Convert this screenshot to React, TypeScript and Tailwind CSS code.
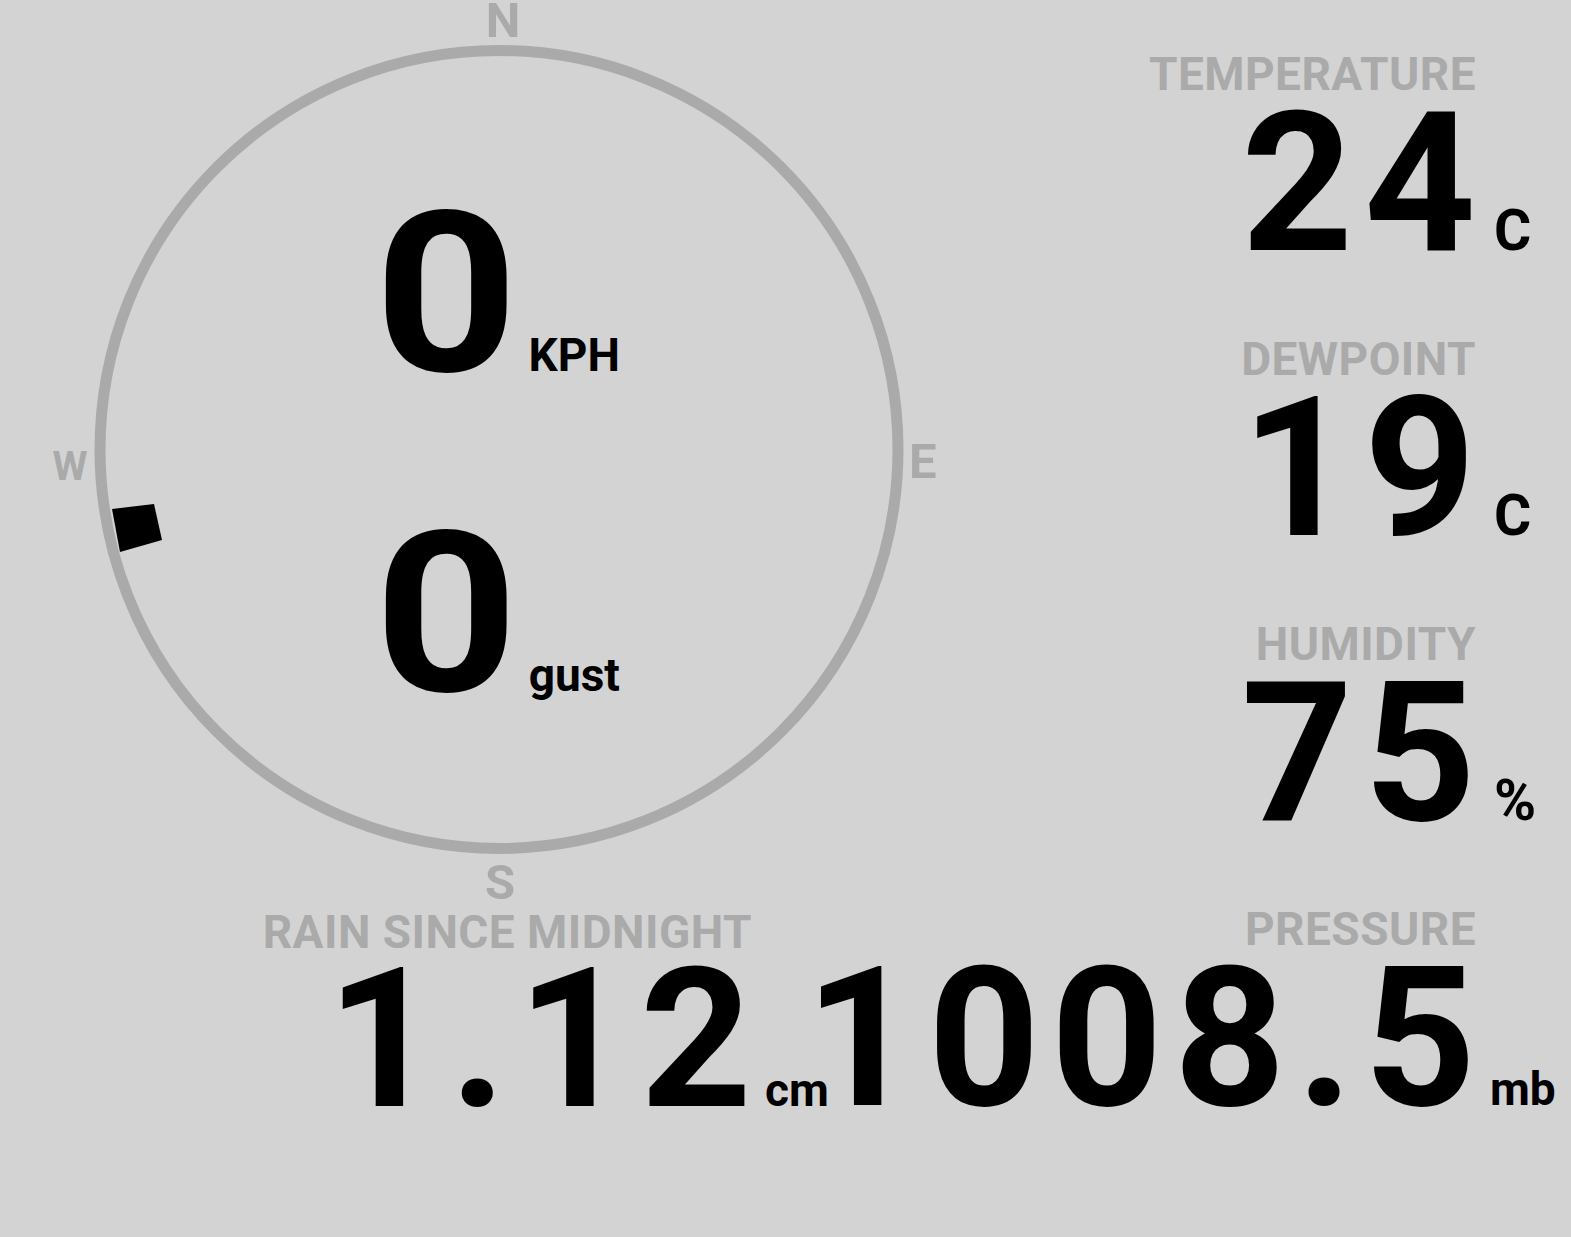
import React from "react";

type StatProps = {
  label: string;
  value: string;
  unit: string;
  unitClass: string;
  unitCol: string;
  numberMt: string;
};

function Stat({ label, value, unit, unitClass, unitCol, numberMt }: StatProps) {
  return (
    <div className="flex flex-col">
      <div className="flex justify-end">
        <div className="shrink-0 whitespace-nowrap text-[46px] leading-[36px] text-[#aaaaaa] tracking-[0.01em]">
          {label}
        </div>
        <div className={unitCol} />
      </div>
      <div className={`flex items-baseline justify-end ${numberMt}`}>
        <div className="shrink-0 whitespace-nowrap text-[195px] leading-[150px] text-black tracking-[11px] -mr-[11px]">
          {value}
        </div>
        <div className={`${unitCol} shrink-0 whitespace-nowrap ${unitClass}`}>{unit}</div>
      </div>
    </div>
  );
}

function Compass() {
  return (
    <div className="relative h-[905px] w-[998px]">
      <svg className="absolute left-0 top-0" width="998" height="905" viewBox="0 0 998 905">
        <circle cx="499" cy="449.5" r="399" fill="none" stroke="#aaaaaa" strokeWidth="11" />
        <polygon points="112,509 154,504 162,540 120,552" fill="#000" />
      </svg>
      <div className="absolute left-[503px] top-0 -translate-x-1/2 text-[49px] leading-[42px] text-[#aaaaaa]">N</div>
      <div className="absolute left-[909px] top-[437px] text-[49px] leading-none text-[#aaaaaa]">E</div>
      <div className="absolute left-[500px] top-[858px] -translate-x-1/2 text-[49px] leading-none text-[#aaaaaa]">S</div>
      <div className="absolute left-[70px] top-[447px] -translate-x-1/2 text-[40px] leading-none text-[#aaaaaa]">W</div>
      <div className="relative flex flex-col items-center gap-[96px] pt-[183px]">
        <div className="flex items-baseline gap-[18px] pl-[4px]">
          <span className="scale-x-[1.12] text-[224px] leading-none text-black">0</span>
          <span className="text-[46px] leading-none text-black">KPH</span>
        </div>
        <div className="flex items-baseline gap-[18px] pl-[4px]">
          <span className="scale-x-[1.12] text-[224px] leading-none text-black">0</span>
          <span className="text-[46px] leading-none text-black">gust</span>
        </div>
      </div>
    </div>
  );
}

export default function App() {
  return (
    <div className="flex h-[1237px] w-full overflow-hidden bg-[#d3d3d3] font-['Roboto',sans-serif] font-bold">
      <div className="flex w-[998px] shrink-0 flex-col">
        <Compass />
        <div className="mt-[9px] w-[832px]">
          <Stat
            label="RAIN SINCE MIDNIGHT"
            value="1.12"
            unit="cm"
            unitClass="text-[46px] leading-none pl-[13px]"
            unitCol="w-[80px]"
            numberMt="mt-[15px]"
          />
        </div>
      </div>
      <div className="flex min-w-0 flex-1 flex-col gap-[82px] pt-[56px]">
        <Stat
          label="TEMPERATURE"
          value="24"
          unit="C"
          unitClass="text-[57px] leading-none pl-[18px]"
          unitCol="w-[95px]"
          numberMt="mt-[17px]"
        />
        <Stat
          label="DEWPOINT"
          value="19"
          unit="C"
          unitClass="text-[57px] leading-none pl-[18px]"
          unitCol="w-[95px]"
          numberMt="mt-[17px]"
        />
        <Stat
          label="HUMIDITY"
          value="75"
          unit="%"
          unitClass="text-[57px] leading-none pl-[18px]"
          unitCol="w-[95px]"
          numberMt="mt-[17px]"
        />
        <Stat
          label="PRESSURE"
          value="1008.5"
          unit="mb"
          unitClass="text-[46px] leading-none pl-[14px]"
          unitCol="w-[95px]"
          numberMt="mt-[17px]"
        />
      </div>
    </div>
  );
}
